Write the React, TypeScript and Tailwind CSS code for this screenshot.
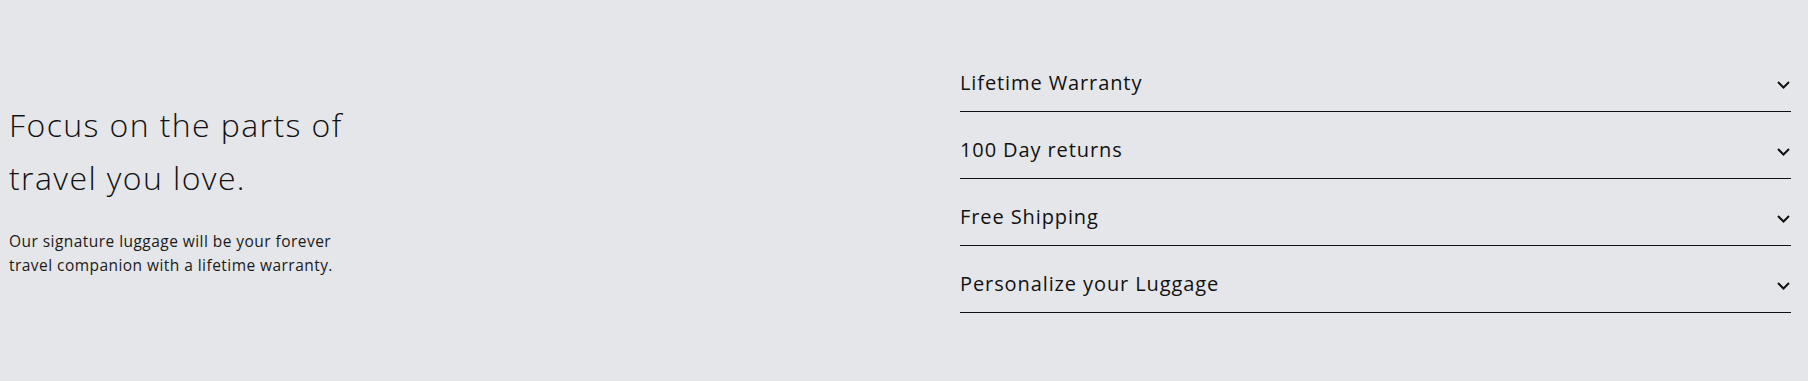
const items = ['Lifetime Warranty', '100 Day returns', 'Free Shipping', 'Personalize your Luggage']

function Chevron() {
  return (
    <svg width="13" height="8" viewBox="0 0 13 8" fill="none" className="mr-[1px] mt-[4px] shrink-0" aria-hidden>
      <path d="M1 1l5.5 5.5L12 1" stroke="#111" strokeWidth="2" />
    </svg>
  )
}

export default function App() {
  return (
    <div className="min-h-[381px] bg-[#e5e6e9] font-['Open_Sans',sans-serif] text-[#111]">
      <section className="flex pl-[9px] pr-[17px] pt-[45px]">
        <div className="flex-1 pt-[53px]">
          <h2 className="text-[32px] font-light leading-[53px] tracking-[1.4px]">
            Focus on the parts of
            <br />
            travel you love.
          </h2>
          <p className="mt-[25px] text-[15.5px] font-normal leading-[24px] tracking-[0.45px] text-[#1a1a1a]">
            Our signature luggage will be your forever
            <br />
            travel companion with a lifetime warranty.
          </p>
        </div>
        <div className="w-[831px]">
          {items.map((item) => (
            <button
              key={item}
              className="flex w-full items-center justify-between border-b border-[#111] pt-[24px] pb-[14px] text-left"
            >
              <span className="text-[20px] leading-[28px] tracking-[0.9px]">{item}</span>
              <Chevron />
            </button>
          ))}
        </div>
      </section>
    </div>
  )
}
